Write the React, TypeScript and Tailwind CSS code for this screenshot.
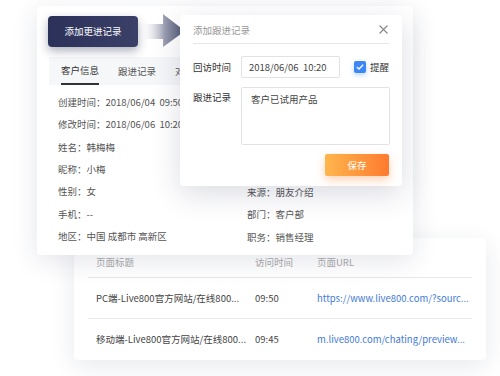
import React from 'react';

const font = { fontFamily: '"Noto Sans CJK SC", "Noto Sans", sans-serif' };

const infoRows: [string, string][] = [
  ['创建时间', '2018/06/04  09:50'],
  ['修改时间', '2018/06/06  10:20'],
  ['姓名', '韩梅梅'],
  ['昵称', '小梅'],
  ['性别', '女'],
  ['手机', '--'],
  ['地区', '中国 成都市 高新区'],
];

const rightRows: [string, string][] = [
  ['来源', '朋友介绍'],
  ['部门', '客户部'],
  ['职务', '销售经理'],
];

const visits = [
  { title: 'PC端-Live800官方网站/在线800...', time: '09:50', url: 'https://www.live800.com/?sourc...' },
  { title: '移动端-Live800官方网站/在线800...', time: '09:45', url: 'm.live800.com/chating/preview...' },
];

const App: React.FC = () => {
  return (
    <div className="relative w-[500px] h-[376px] overflow-hidden bg-white text-[9.5px] text-[#555]" style={font}>
      {/* Visit table card */}
      <div className="absolute left-[74px] top-[238px] w-[412px] h-[122px] bg-white rounded-[4px] shadow-[0_6px_24px_rgba(30,40,80,0.10)] px-[14px] pt-[16px]">
        <div className="flex h-[16px] items-center border-b border-[#e8e8ec] box-content pb-[7px] text-[#aaa]">
          <span className="w-[167px] pl-[8px]">页面标题</span>
          <span className="w-[62px]">访问时间</span>
          <span>页面URL</span>
        </div>
        {visits.map((v) => (
          <div key={v.time} className="flex h-[41px] items-center border-b border-[#e8e8ec] last:border-b-0 text-[#444]">
            <span className="w-[167px] pl-[8px] whitespace-nowrap">{v.title}</span>
            <span className="w-[62px]">{v.time}</span>
            <span className="text-[#3f7ad6] whitespace-nowrap">{v.url}</span>
          </div>
        ))}
      </div>

      {/* Customer info card */}
      <div className="absolute left-[37px] top-[6px] w-[376px] h-[249px] bg-white rounded-[4px] shadow-[0_6px_26px_rgba(30,40,80,0.12)]">
        {/* tab bar: the part behind the dialog is clipped */}
        <div className="mt-[51px] ml-[12px] w-[132px] h-[28px] overflow-hidden bg-[#f6f7f9] flex items-stretch pl-[12px] gap-[19px] text-[#555] whitespace-nowrap">
          <div className="flex items-center border-b-2 border-[#333] text-[#333]">客户信息</div>
          <div className="flex items-center">跟进记录</div>
          <div className="flex items-center">对话记录</div>
        </div>
        <div className="relative mt-[6px] pl-[21px]">
          {infoRows.map(([k, v]) => (
            <div key={k} className="h-[22.3px] flex items-center whitespace-pre">
              {k}：{v}
            </div>
          ))}
          <div className="absolute left-[210px] top-[90px]">
            {rightRows.map(([k, v]) => (
              <div key={k} className="h-[22.3px] flex items-center">
                {k}：{v}
              </div>
            ))}
          </div>
        </div>
      </div>

      {/* Dark trigger button */}
      <div className="absolute left-[48px] top-[16px] w-[90px] h-[31px] rounded-[4px] bg-gradient-to-r from-[#2b3159] to-[#3a4068] shadow-[0_4px_10px_rgba(30,35,70,0.35)] flex items-center justify-center text-white">
        添加更进记录
      </div>

      {/* Arrow */}
      <svg className="absolute left-[140px] top-[13px]" width="46" height="34" viewBox="0 0 46 34">
        <defs>
          <linearGradient id="arr" x1="0" y1="0" x2="1" y2="0">
            <stop offset="0" stopColor="#ffffff" stopOpacity="0" />
            <stop offset="0.55" stopColor="#9a9db0" />
            <stop offset="1" stopColor="#4a4f6e" />
          </linearGradient>
        </defs>
        <path d="M0 11 H23 V1 L45 18 L23 34 V26 H0 Z" fill="url(#arr)" />
      </svg>

      {/* Dialog */}
      <div className="absolute left-[180px] top-[15px] w-[222px] h-[171px] bg-white rounded-[4px] shadow-[0_8px_30px_rgba(30,40,80,0.16)] px-[13px]">
        <div className="h-[29px] flex items-center justify-between border-b border-[#e6e6ea] text-[#999]">
          <span className="pt-[2px]">添加跟进记录</span>
          <svg width="9" height="9" viewBox="0 0 9 9" className="mr-[1px]">
            <path d="M0.5 0.5 L8.5 8.5 M8.5 0.5 L0.5 8.5" stroke="#888" strokeWidth="1.1" />
          </svg>
        </div>
        <div className="mt-[12px] flex items-center text-[#333] whitespace-nowrap">
          <span className="w-[48px] shrink-0">回访时间</span>
          <div className="w-[99px] h-[22px] shrink-0 border border-[#e2e2e6] rounded-[2px] flex items-center pl-[7px] text-[#444] whitespace-pre">
            2018/06/06  10:20
          </div>
          <div className="ml-[14px] w-[12px] h-[12px] shrink-0 rounded-[2px] bg-[#3b87f5] flex items-center justify-center shadow-[0_2px_5px_rgba(59,135,245,0.35)]">
            <svg width="8" height="6" viewBox="0 0 8 6">
              <path d="M0.8 3 L3 5 L7.2 0.8" stroke="#fff" strokeWidth="1.3" fill="none" />
            </svg>
          </div>
          <span className="ml-[4px] shrink-0">提醒</span>
        </div>
        <div className="mt-[9px] flex items-start text-[#333]">
          <span className="w-[48px] shrink-0 pt-[3px]">跟进记录</span>
          <div className="w-[149px] h-[58px] shrink-0 border border-[#e2e2e6] rounded-[2px] pl-[9px] pt-[4px] text-[#444]">
            客户已试用产品
          </div>
        </div>
        <div className="mt-[9px] flex justify-end">
          <div className="w-[64px] h-[22px] rounded-[2px] bg-gradient-to-r from-[#ffb54c] to-[#ff7a2f] shadow-[0_4px_10px_rgba(255,130,50,0.35)] flex items-center justify-center text-white">
            保存
          </div>
        </div>
      </div>
    </div>
  );
};

export default App;
